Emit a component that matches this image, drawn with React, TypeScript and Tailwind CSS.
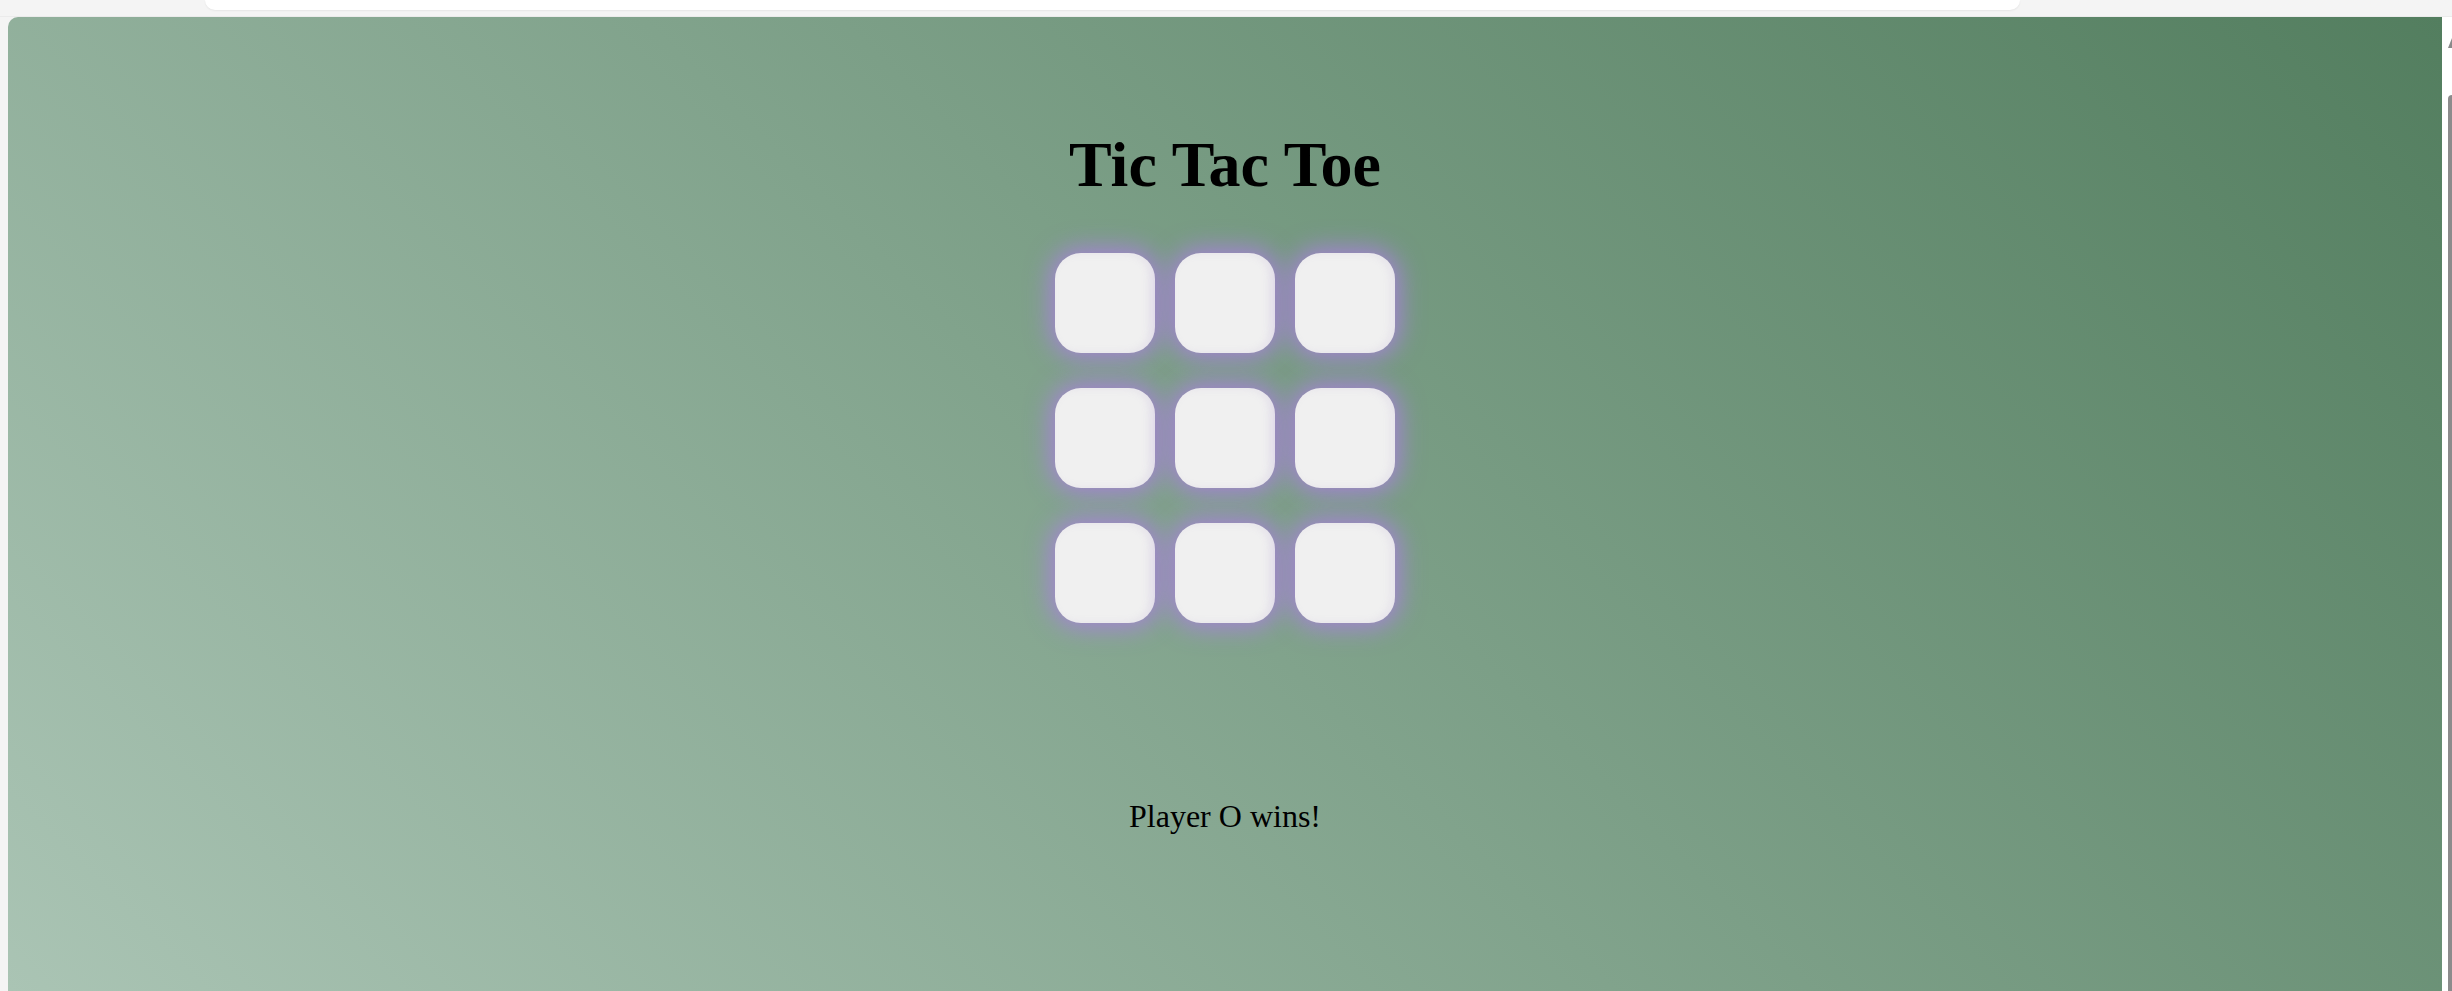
import React from 'react'

const cells = Array.from({ length: 9 })

export default function App() {
  return (
    <div className="w-[2452px] h-[991px] overflow-hidden bg-[#f4f4f4] flex flex-col font-['Liberation_Serif',serif]">
      {/* browser strip */}
      <div className="h-[17px] flex shrink-0 border-b border-[#ebebeb]">
        <div className="w-[205px]" />
        <div className="w-[1815px] h-[10px] bg-white rounded-b-[14px] shadow-[0_1px_2px_rgba(0,0,0,0.06)]" />
      </div>

      <div className="flex flex-1 min-h-0">
        <div className="w-[8px] shrink-0" />

        <main className="flex-1 rounded-tl-[10px] bg-[linear-gradient(45deg,#aac4b4,#537e5f)] flex flex-col items-center text-black">
          <h1 className="mt-[111px] text-[64px] leading-[74px] font-bold">Tic Tac Toe</h1>

          <div className="mt-[51px] grid grid-cols-[100px_100px_100px] gap-x-[20px] gap-y-[35px]">
            {cells.map((_, i) => (
              <button
                key={i}
                className="w-[100px] h-[100px] rounded-[26px] bg-[#f0f0f0] shadow-[0_0_24px_5px_rgba(170,128,222,0.9),inset_-4px_0_8px_rgba(160,130,200,0.12)]"
              />
            ))}
          </div>

          <p className="mt-[175px] text-[32px] leading-[37px]">Player O wins!</p>
        </main>

        <div className="w-[10px] shrink-0 bg-white relative">
          <div className="absolute left-[6px] top-[21px] w-0 h-0 border-l-[4px] border-r-0 border-b-[10px] border-l-transparent border-b-[#8a8a8a]" />
          <div className="absolute left-[6px] top-[78px] w-[4px] bottom-0 rounded-tl-[4px] bg-[#8c8c8c]" />
        </div>
      </div>
    </div>
  )
}
